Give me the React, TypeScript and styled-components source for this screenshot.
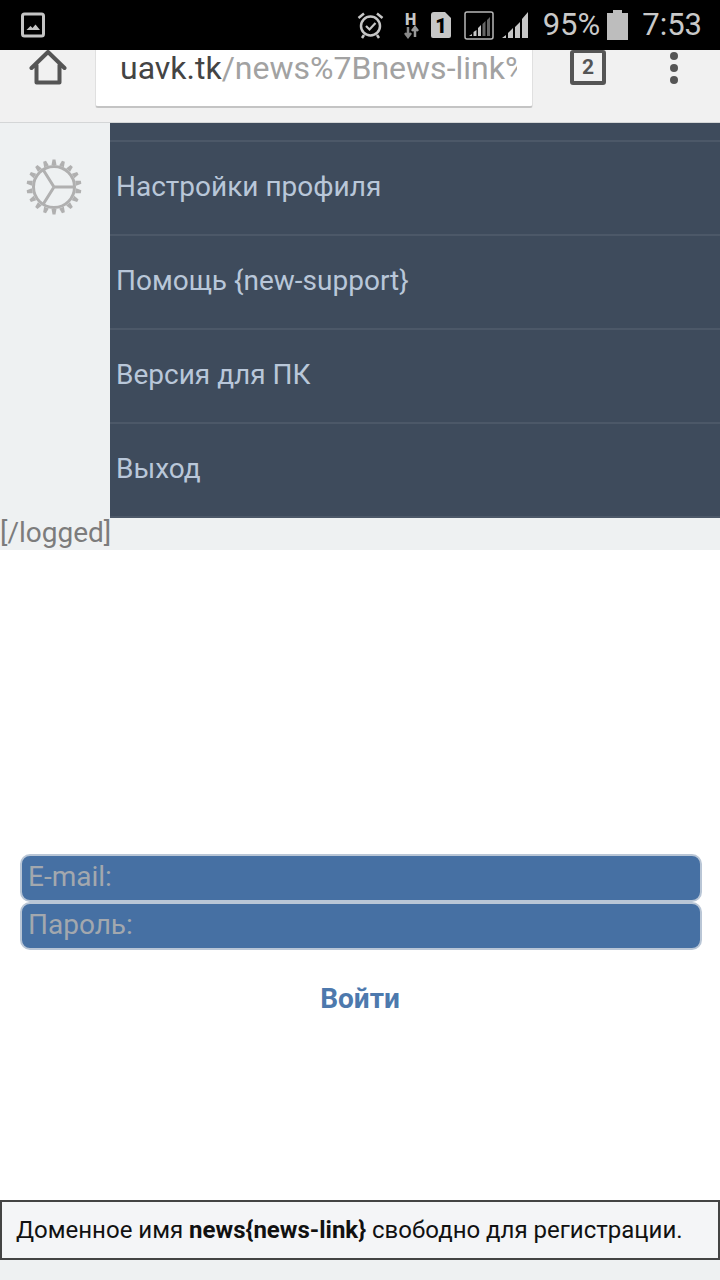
import React from "react";
import styled, { createGlobalStyle } from "styled-components";

const Global = createGlobalStyle`
  html, body { margin: 0; padding: 0; background: #eef1f2; }
  * { box-sizing: border-box; }
`;

const Page = styled.div`
  width: 720px;
  height: 1280px;
  overflow: hidden;
  display: flex;
  flex-direction: column;
  font-family: Roboto, "Noto Sans", sans-serif;
  background: #eef1f2;
`;

const StatusBar = styled.div`
  height: 50px;
  flex: none;
  background: #000;
  display: flex;
  align-items: center;
  padding: 0 18px 0 20px;
  color: #c8c8c8;
`;
const Spacer = styled.div`
  flex: 1;
`;
const StatusGroup = styled.div`
  display: flex;
  align-items: center;
`;
const StatusText = styled.span<{ $left: number }>`
  font-size: 31px;
  line-height: 50px;
  margin-left: ${(p) => p.$left}px;
  color: #c9c9c9;
`;

const Toolbar = styled.div`
  height: 73px;
  flex: none;
  background: #f1f1f1;
  display: flex;
  align-items: flex-start;
  position: relative;
  border-bottom: 1px solid #d4d6d7;
`;
const HomeSlot = styled.div`
  width: 95px;
  padding-left: 29px;
  flex: none;
  line-height: 0;
`;
const UrlBox = styled.div`
  width: 438px;
  height: 58px;
  flex: none;
  background: #fff;
  border-radius: 0 0 3px 3px;
  border: 1px solid #e0e0e0;
  border-top: 0;
  border-bottom: 2px solid #c4c4c4;
  padding-left: 24px;
  padding-right: 15px;
  overflow: hidden;
`;
const UrlText = styled.div`
  font-size: 32px;
  line-height: 37px;
  white-space: nowrap;
  overflow: hidden;
  color: #a2a2a2;
`;
const UrlHost = styled.span`
  color: #444;
`;
const TabSlot = styled.div`
  margin-left: 37px;
  width: 36px;
  height: 35px;
  border: 4px solid #555;
  border-top-width: 3px;
  border-radius: 3px;
  display: flex;
  align-items: center;
  justify-content: center;
  font-size: 21px;
  font-weight: 700;
  color: #555;
  line-height: 1;
`;
const MenuDots = styled.div`
  margin-left: 64px;
  display: flex;
  flex-direction: column;
  gap: 4px;
  padding-top: 2px;
`;
const Dot = styled.span`
  width: 8px;
  height: 8px;
  border-radius: 50%;
  background: #555;
`;

const MenuArea = styled.div`
  flex: none;
  display: flex;
`;
const Side = styled.div`
  width: 110px;
  flex: none;
  padding: 36px 0 0 26px;
  line-height: 0;
`;
const Menu = styled.div`
  flex: 1;
  background: #3e4b5c;
`;
const MenuTop = styled.div`
  height: 19px;
  border-bottom: 2px solid #4c5868;
`;
const MenuRow = styled.div`
  height: 94px;
  border-bottom: 2px solid #4c5868;
  display: flex;
  align-items: center;
  padding: 0 0 4px 6px;
  font-size: 28px;
  color: #b9c7d9;
`;

const LoggedRow = styled.div`
  height: 32px;
  flex: none;
  font-size: 28px;
  line-height: 29px;
  color: #7c7c7c;
`;

const Main = styled.div`
  flex: none;
  height: 650px;
  background: #fff;
  padding: 304px 18px 0 20px;
`;
const Field = styled.div`
  height: 48px;
  background: #4670a3;
  border: 2px solid #b9c6d6;
  border-radius: 10px;
  padding-left: 6px;
  font-size: 28px;
  line-height: 41px;
  color: #a3a8ae;
`;
const LoginLink = styled.div`
  text-align: center;
  margin-top: 33px;
  padding-right: 2px;
  font-size: 28px;
  line-height: 32px;
  font-weight: 700;
  color: #4d79ad;
`;

const Notice = styled.div`
  flex: none;
  height: 60px;
  background: #f4f5f7;
  border: 2px solid #444;
  padding-left: 14px;
  display: flex;
  align-items: center;
  font-size: 24px;
  color: #111;
  white-space: pre;
`;

export default function App() {
  return (
    <Page>
      <Global />
      <StatusBar>
        <svg width="26" height="26" viewBox="0 0 26 26">
          <rect x="2.5" y="2" width="21" height="22" rx="2" fill="none" stroke="#c4c4c4" strokeWidth="3" />
          <path d="M6.5 18l4-4 2 2 3-3.5 4.5 5.5z" fill="#c4c4c4" />
        </svg>
        <Spacer />
        <StatusGroup>
          <svg width="27" height="28" viewBox="0 0 27 28" style={{ marginRight: 19 }}>
            <circle cx="13.5" cy="15" r="9.5" fill="none" stroke="#c6c6c6" strokeWidth="2.5" />
            <path d="M9 15l3.5 3.5 6-6.5" fill="none" stroke="#c6c6c6" strokeWidth="2.2" />
            <path d="M1.5 7L7 2.5M25.500 7L20 2.5M7 24l-2 3M20 24l2 3" stroke="#c6c6c6" strokeWidth="2.5" />
          </svg>
          <svg width="17" height="28" viewBox="0 0 17 28" overflow="visible" style={{ marginRight: 10 }}>
            <text x="2" y="14" fontFamily="Roboto, sans-serif" fontWeight="900" fontSize="16" fill="#c6c6c6">H</text>
            <path d="M5 16v9M2 22l3 4 3-4" stroke="#888" strokeWidth="2.5" fill="none" />
            <path d="M12 26v-9M9 20l3-4 3 4" stroke="#999" strokeWidth="2.5" fill="none" />
          </svg>
          <svg width="22" height="28" viewBox="0 0 22 28" style={{ marginRight: 12 }}>
            <path d="M4 1h11l6 6v18a2 2 0 0 1-2 2H3a2 2 0 0 1-2-2V4a3 3 0 0 1 3-3z" fill="#c6c6c6" />
            <text x="11" y="22" textAnchor="middle" fontFamily="Roboto, sans-serif" fontWeight="900" fontSize="20" fill="#000">1</text>
          </svg>
          <svg width="30" height="29" viewBox="0 0 30 29" style={{ marginRight: 7 }}>
            <rect x="1" y="1" width="28" height="27" rx="2" fill="none" stroke="#b8b8b8" strokeWidth="1.5" />
            <path d="M5 25h3v-2zM9.5 25h3v-6l-3 2zM14 25h3V14l-3 3z" fill="#c6c6c6" />
            <path d="M18.5 25h3V10l-3 3zM23 25h3V6l-3 3z" fill="#666" />
          </svg>
          <svg width="29" height="28" viewBox="0 0 29 28" style={{ marginRight: 13 }}>
            <path d="M1 27h4v-3zM7 27h5V17l-5 5zM14 27h5V11l-5 5zM21 27h6V1l-6 7z" fill="#c6c6c6" />
          </svg>
          <StatusText $left={0}>95%</StatusText>
          <svg width="21" height="30" viewBox="0 0 21 30" style={{ marginLeft: 7 }}>
            <path d="M6 0h9v3h6v27H0V3h6z" fill="#bdbdbd" />
          </svg>
          <StatusText $left={14}>7:53</StatusText>
        </StatusGroup>
      </StatusBar>

      <Toolbar>
        <HomeSlot>
          <svg width="38" height="36" viewBox="0 0 38 36">
            <path d="M2.5 18L19 2 35.5 18M7.5 15v17.5h23V15" fill="none" stroke="#555" strokeWidth="4" strokeLinejoin="round" strokeLinecap="round" />
          </svg>
        </HomeSlot>
        <UrlBox>
          <UrlText>
            <UrlHost>uavk.tk</UrlHost>/news%7Bnews-link%7D
          </UrlText>
        </UrlBox>
        <TabSlot>2</TabSlot>
        <MenuDots>
          <Dot />
          <Dot />
          <Dot />
        </MenuDots>
      </Toolbar>

      <MenuArea>
        <Side>
          <svg width="56" height="56" viewBox="0 0 56 56">
            <g fill="#b0b0b0">
              {Array.from({ length: 18 }).map((_, i) => (
                <path key={i} d="M25.5 6l1-5.500h3l1 5.500z" transform={`rotate(${i * 20} 28 28)`} />
              ))}
            </g>
            <circle cx="28" cy="28" r="20.5" fill="#eef1f2" stroke="#b0b0b0" strokeWidth="3" />
            <path d="M28 28L17 10.5M28 28H48.5M28 28L17 45.5" fill="none" stroke="#b0b0b0" strokeWidth="3" />
          </svg>
        </Side>
        <Menu>
          <MenuTop />
          <MenuRow>Настройки профиля</MenuRow>
          <MenuRow>Помощь {"{new-support}"}</MenuRow>
          <MenuRow>Версия для ПК</MenuRow>
          <MenuRow>Выход</MenuRow>
        </Menu>
      </MenuArea>

      <LoggedRow>[/logged]</LoggedRow>

      <Main>
        <Field>E-mail:</Field>
        <Field>Пароль:</Field>
        <LoginLink>Войти</LoginLink>
      </Main>

      <Notice>
        Доменное имя <b>news{"{news-link}"}</b> свободно для регистрации.
      </Notice>
    </Page>
  );
}
